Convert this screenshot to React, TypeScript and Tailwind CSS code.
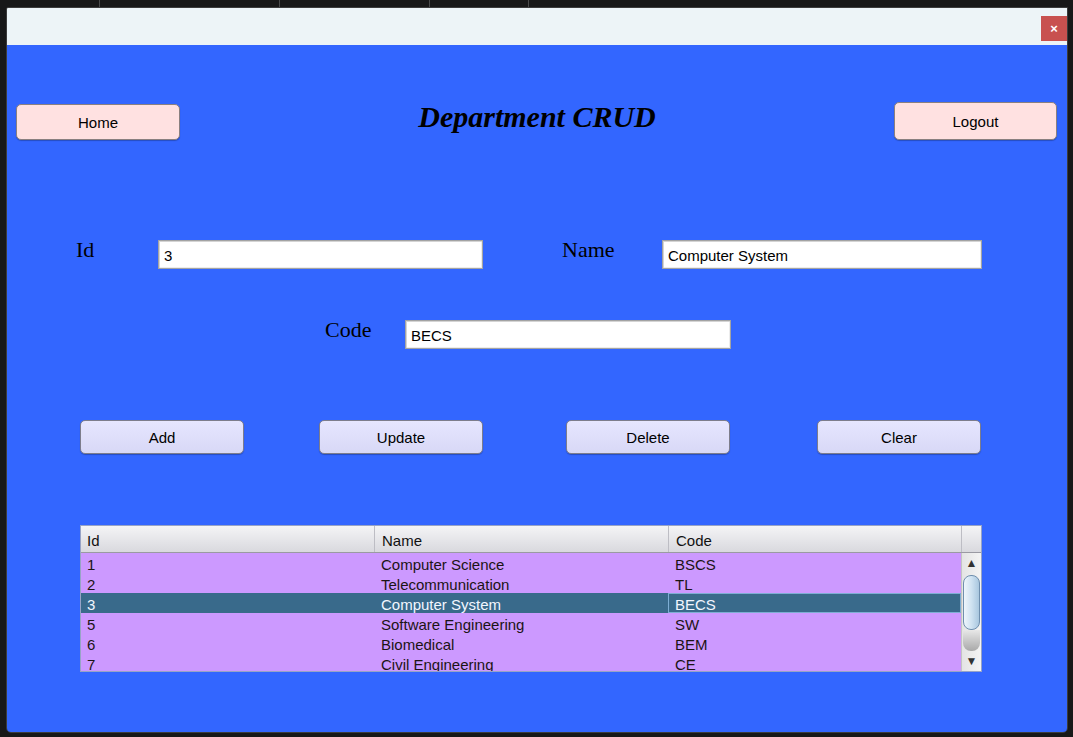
import React from 'react'

const rows = [
  { id: '1', name: 'Computer Science', code: 'BSCS' },
  { id: '2', name: 'Telecommunication', code: 'TL' },
  { id: '3', name: 'Computer System', code: 'BECS', selected: true },
  { id: '5', name: 'Software Engineering', code: 'SW' },
  { id: '6', name: 'Biomedical', code: 'BEM' },
  { id: '7', name: 'Civil Engineering', code: 'CE' },
]

const sans = "font-['Liberation_Sans',Arial,sans-serif]"
const serif = "font-['Liberation_Serif','Times_New_Roman',serif]"

const Field = ({ value, width }: { value: string; width: string }) => (
  <div
    className={`${width} h-[29px] bg-white border border-[#a3a3a3] shadow-[inset_1px_1px_0_#d4d4d4,inset_-1px_-1px_0_#ececec] pl-[5px] pt-[2px] leading-[25px] text-[15px] text-black ${sans}`}
  >
    {value}
  </div>
)

const ActionButton = ({ label, className }: { label: string; className?: string }) => (
  <button
    className={`w-[164px] h-[34px] pt-[2px] rounded-[5px] border border-[#7d7d8c] bg-gradient-to-b from-[#e6e6ff] to-[#d8d8f6] shadow-[0_1px_1px_rgba(0,0,0,0.25)] text-[15px] text-black ${sans} ${className ?? ''}`}
  >
    {label}
  </button>
)

export default function App() {
  return (
    <div className="w-[1073px] h-[737px] bg-[#181818] overflow-hidden">
      {/* window behind, only a strip shows */}
      <div className="h-[7px] flex">
        <div className="w-[99px]" />
        <div className="w-[180px] border-l border-[#4a4a4a]" />
        <div className="w-[150px] border-l border-[#4a4a4a]" />
        <div className="w-[100px] border-l border-[#4a4a4a] border-r" />
      </div>

      <div className="ml-[6px] w-[1062px] h-[726px] border border-[#3c3c3c] rounded-b-[5px] rounded-tl-[2px] overflow-hidden flex flex-col">
        <div className="h-[37px] bg-[#edf4f7] flex justify-end items-start pt-[8px]">
          <button className={`w-[26px] h-[25px] bg-[#c8514f] text-white text-[13px] font-bold leading-none ${sans}`}>
            ×
          </button>
        </div>

        <div className="flex-1 bg-[#3366ff] flex flex-col">
          <div className="mt-[57px] pl-[9px] pr-[10px] flex justify-between items-start">
            <button
              className={`mt-[2px] pt-[2px] w-[164px] h-[36px] rounded-[5px] border border-[#8a8080] bg-[#ffe1e1] shadow-[0_1px_1px_rgba(0,0,0,0.25)] text-[15px] text-black ${sans}`}
            >
              Home
            </button>
            <h1 className={`mt-[0px] text-[30px] leading-[30px] font-bold italic text-black ${serif}`}>
              Department CRUD
            </h1>
            <button
              className={`w-[163px] h-[38px] pt-[2px] rounded-[5px] border border-[#8a8080] bg-[#ffe1e1] shadow-[0_1px_1px_rgba(0,0,0,0.25)] text-[15px] text-black ${sans}`}
            >
              Logout
            </button>
          </div>

          <div className="mt-[100px] pl-[69px] flex items-start">
            <span className={`w-[82px] -mt-[1px] text-[22px] leading-[22px] text-black ${serif}`}>Id</span>
            <Field value="3" width="w-[325px]" />
            <span className={`ml-[79px] w-[100px] -mt-[1px] text-[22px] leading-[22px] text-black ${serif}`}>Name</span>
            <Field value="Computer System" width="w-[320px]" />
          </div>

          <div className="mt-[51px] pl-[318px] flex items-start">
            <span className={`w-[80px] -mt-[1px] text-[22px] leading-[22px] text-black ${serif}`}>Code</span>
            <Field value="BECS" width="w-[326px]" />
          </div>

          <div className="mt-[71px] pl-[73px] flex">
            <ActionButton label="Add" />
            <ActionButton label="Update" className="ml-[75px]" />
            <ActionButton label="Delete" className="ml-[83px]" />
            <ActionButton label="Clear" className="ml-[87px]" />
          </div>

          <div className={`mt-[71px] ml-[73px] w-[902px] h-[147px] border border-[#97a3c6] bg-[#cc99ff] flex flex-col text-[15px] ${sans}`}>
            <div className="h-[27px] flex bg-gradient-to-b from-[#f4f4f6] to-[#d9d9de] border-b border-[#9a9aa2] text-[#111]">
              <div className="w-[293px] pl-[6px] leading-[29px]">Id</div>
              <div className="w-[294px] pl-[7px] leading-[29px] border-l border-[#bdbdc4]">Name</div>
              <div className="w-[293px] pl-[7px] leading-[29px] border-l border-[#bdbdc4]">Code</div>
              <div className="w-[20px] border-l border-[#bdbdc4]" />
            </div>

            <div className="flex-1 flex overflow-hidden">
              <div className="w-[880px] overflow-hidden">
                {rows.map((r) => (
                  <div
                    key={r.id}
                    className={`h-[20px] flex leading-[24px] ${r.selected ? 'bg-[#396a8b] text-[#f2f6ff]' : 'text-[#1c1414]'}`}
                  >
                    <div className="w-[293px] pl-[6px]">{r.id}</div>
                    <div className="w-[294px] pl-[7px]">{r.name}</div>
                    <div
                      className={`w-[293px] ${r.selected ? 'border border-[#7eaed4] pl-[6px] leading-[22px]' : 'pl-[7px]'}`}
                    >
                      {r.code}
                    </div>
                  </div>
                ))}
              </div>

              <div className="w-[20px] flex flex-col bg-gradient-to-r from-[#e4e4e4] to-[#f4f4f4] border-l border-[#c4c4c4]">
                <div className="h-[20px] flex items-center justify-center text-[12px] text-[#333]">▲</div>
                <div className="mt-[2px] mx-[1px] h-[55px] rounded-[8px] border border-[#6f8fae] bg-gradient-to-r from-[#eef5fb] via-[#cfe2f1] to-[#a9c7df]" />
                <div className="h-[21px] mx-[1px] rounded-b-[8px] bg-gradient-to-b from-[#e8e8e8] to-[#a9a9a9]" />
                <div className="h-[20px] flex items-center justify-center text-[12px] text-[#333]">▼</div>
              </div>
            </div>
          </div>
        </div>
      </div>
    </div>
  )
}
